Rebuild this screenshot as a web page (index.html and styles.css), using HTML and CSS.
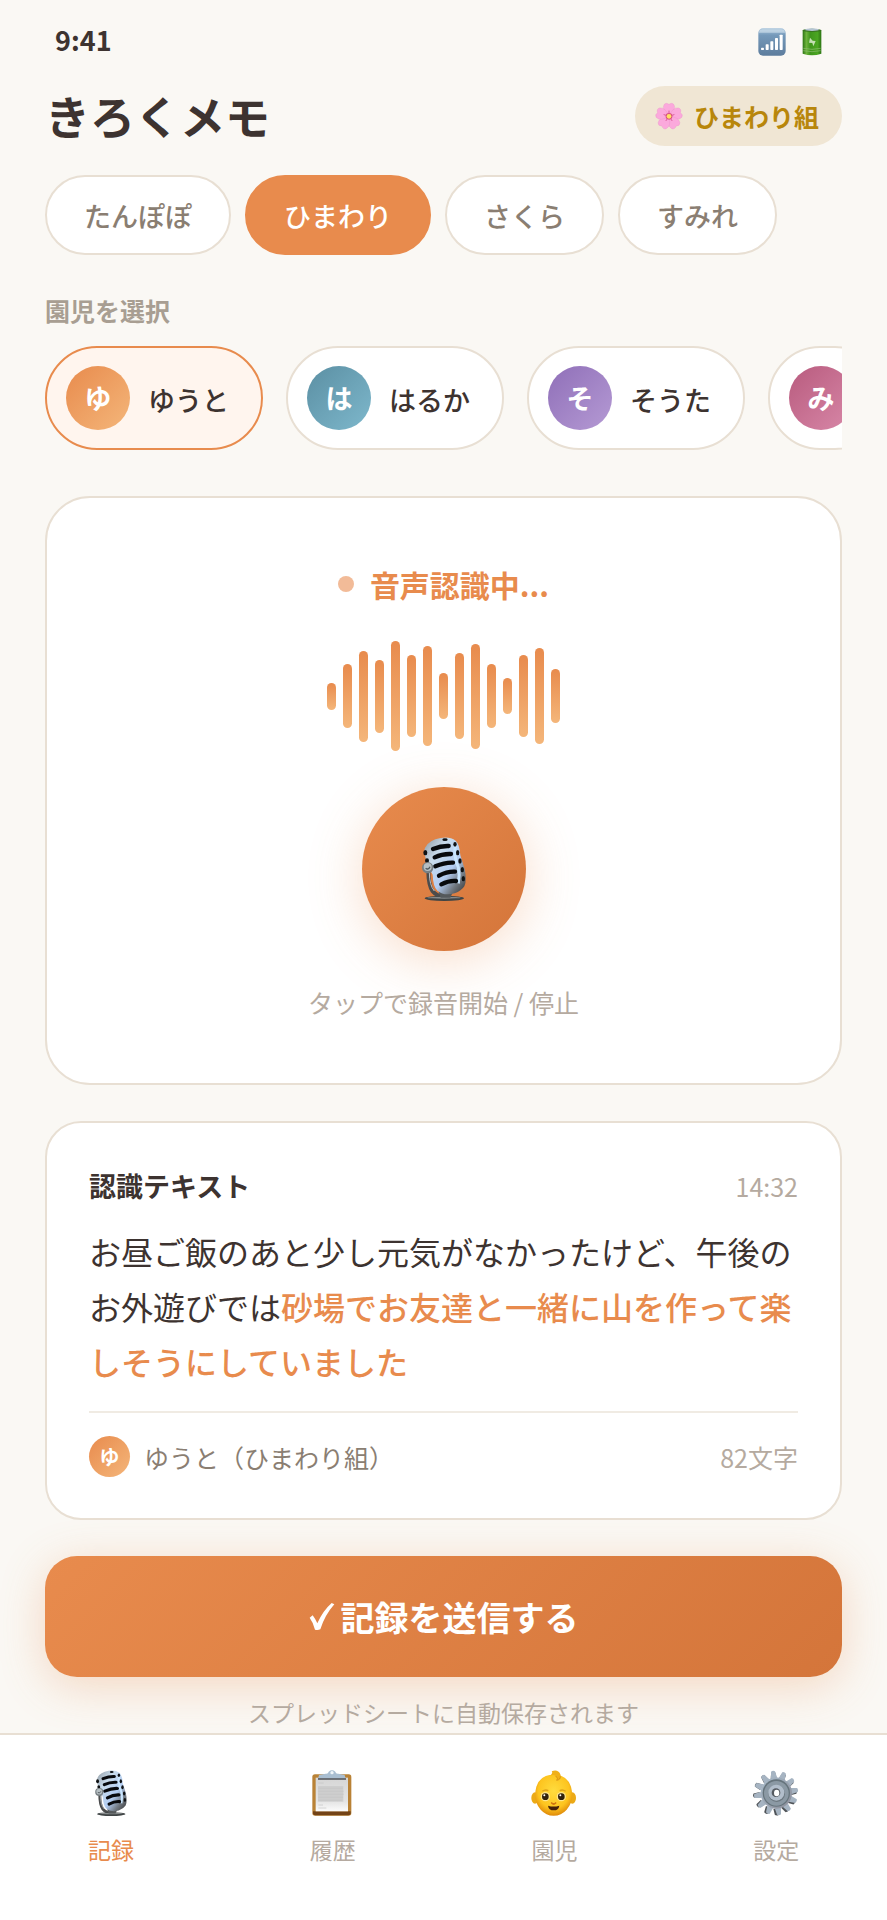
FILE: index.html
```
<!DOCTYPE html>
<html lang="ja">

<head>
    <meta charset="utf-8">
    <meta name="viewport" content="width=device-width, initial-scale=1">
    <title>きろくメモ</title>
    <link rel="stylesheet" href="styles.css">
</head>

<body>
    <!-- microphone is used twice, so it lives in a symbol -->
    <svg class="defs" width="0" height="0" aria-hidden="true">
        <defs>
            <linearGradient id="steel" x1="0" y1="0" x2="1" y2="1">
                <stop offset="0" stop-color="#8e979f" />
                <stop offset="0.3" stop-color="#c9dcec" />
                <stop offset="0.6" stop-color="#b3cdf2" />
                <stop offset="0.8" stop-color="#70777f" />
                <stop offset="1" stop-color="#30302f" />
            </linearGradient>
            <linearGradient id="gear" x1="0" y1="0" x2="1" y2="1">
                <stop offset="0" stop-color="#a9bccc" />
                <stop offset="1" stop-color="#8c8d98" />
            </linearGradient>
            <radialGradient id="skin" cx="0.5" cy="0.4" r="0.6">
                <stop offset="0" stop-color="#ffdc3e" />
                <stop offset="0.7" stop-color="#fdc41f" />
                <stop offset="1" stop-color="#e08b0a" />
            </radialGradient>
            <linearGradient id="signal" x1="0" y1="0" x2="0" y2="1">
                <stop offset="0" stop-color="#a9c5dc" />
                <stop offset="0.25" stop-color="#7599ba" />
                <stop offset="1" stop-color="#5d7d9d" />
            </linearGradient>
            <linearGradient id="battery" x1="0" y1="0" x2="1" y2="0">
                <stop offset="0" stop-color="#2c7413" />
                <stop offset="0.2" stop-color="#6db33c" />
                <stop offset="0.4" stop-color="#3f951c" />
                <stop offset="0.8" stop-color="#4ba622" />
                <stop offset="1" stop-color="#2c7413" />
            </linearGradient>
            <linearGradient id="paper" x1="0" y1="0" x2="0" y2="1">
                <stop offset="0" stop-color="#d6d6d6" />
                <stop offset="0.7" stop-color="#e4e4e4" />
                <stop offset="1" stop-color="#fcfcfc" />
            </linearGradient>
            <symbol id="mic" viewBox="0 0 192 192">
                <path d="M49 100 Q49 145 62 163 Q73 177 96 179" fill="none" stroke="#4b4c4d" stroke-width="12" />
                <path d="M52 105 Q52 145 67 162" fill="none" stroke="#b8bec3" stroke-width="3" />
                <ellipse cx="97" cy="184" rx="59" ry="8" fill="#3f4445" />
                <ellipse cx="96" cy="182" rx="50" ry="3" fill="#85898a" />
                <path d="M80 164h43l-8 18H86z" fill="#55595b" />
                <path d="M36 45 Q39 18 70 7 Q109 -5 131 11 Q143 22 145 55 L158 96 Q165 132 157 148 Q148 162 128 169 Q96 178 76 161 Q63 148 62 113 Q47 91 36 45z" fill="url(#steel)" />
                <path d="M130 21 Q125 62 139 91 Q144 115 139 139" fill="none" stroke="#c9e6ff" stroke-width="9" />
                <g fill="none" stroke="#080a0d" stroke-width="13" stroke-linecap="round">
                    <path d="M63 36 Q88 26 110 27" />
                    <path d="M68 61 Q91 50 117 51" />
                    <path d="M70 88 Q98 76 123 77" />
                    <path d="M81 116 Q105 103 129 104" />
                    <path d="M88 142 Q112 130 132 132" />
                </g>
                <g fill="#101214">
                    <ellipse cx="99" cy="8" rx="8" ry="4" />
                    <ellipse cx="129" cy="22" rx="5" ry="7" />
                    <ellipse cx="137" cy="47" rx="5" ry="8" />
                    <ellipse cx="144" cy="72" rx="5" ry="8" />
                    <ellipse cx="151" cy="98" rx="5" ry="8" />
                    <ellipse cx="154" cy="125" rx="5" ry="8" />
                    <ellipse cx="40" cy="47" rx="6" ry="8" />
                    <ellipse cx="45" cy="71" rx="6" ry="7" />
                </g>
                <circle cx="47" cy="92" r="17" fill="#777f83" />
                <circle cx="47" cy="90" r="12" fill="#b6bfc3" />
                <path d="M41 94q8 6 13-5" fill="none" stroke="#4e575b" stroke-width="4" />
            </symbol>
        </defs>
    </svg>

    <div class="status-bar">
        <span>9:41</span>
        <div class="status-icons">
            <svg width="28" height="28" viewBox="0 0 84 84" role="img" aria-label="電波">
                <rect x="1" y="1" width="82" height="82" rx="14" fill="url(#signal)" />
                <path d="M14 4h56q10 0 11 10H3Q4 4 14 4z" fill="#d6e4ef" opacity="0.6" />
                <g fill="#fff">
                    <rect x="9" y="59" width="9" height="7" rx="2" />
                    <rect x="23" y="49" width="9" height="17" rx="2" />
                    <rect x="37" y="40" width="9" height="26" rx="2" />
                    <rect x="51" y="30" width="9" height="36" rx="2" />
                    <rect x="65" y="20" width="9" height="46" rx="2" />
                </g>
            </svg>
            <svg width="28" height="28" viewBox="0 0 84 84" role="img" aria-label="電池">
                <path d="M14 6v71q28 10 56 0V6z" fill="url(#battery)" />
                <ellipse cx="42" cy="7" rx="28" ry="5" fill="#397420" />
                <ellipse cx="42" cy="5" rx="21" ry="4" fill="#b5c5d3" />
                <path d="M16 61q26 6 52 0M16 68q26 6 52 0" fill="none" stroke="#8fbd74" stroke-width="2" />
                <path d="M36 29l-3 15 10 1 3 10 7-16-9-1z" fill="#c4dfb4" />
            </svg>
        </div>
    </div>

    <main>
        <header class="header">
            <h1>きろくメモ</h1>
            <div class="badge">
                <svg width="28" height="28" viewBox="0 0 84 84" aria-hidden="true">
                    <g fill="#fba9dc" stroke="#e98fc8" stroke-width="1">
                        <path id="petal" d="M42 43Q19 24 27 8Q33 0 42 7Q51 0 57 8Q65 24 42 43z" />
                        <use href="#petal" transform="rotate(72 42 43)" />
                        <use href="#petal" transform="rotate(144 42 43)" />
                        <use href="#petal" transform="rotate(216 42 43)" />
                        <use href="#petal" transform="rotate(288 42 43)" />
                    </g>
                    <path d="M42 43V27M42 43l15-5M42 43l9 13M42 43l-9 13M42 43l-15-5" stroke="#dd5f9c" stroke-width="3" stroke-linecap="round" />
                    <circle cx="42" cy="43" r="10" fill="#d7527f" />
                    <circle cx="42" cy="43" r="7" fill="#ffe166" />
                </svg>
                <span>ひまわり組</span>
            </div>
        </header>

        <div class="tabs">
            <button class="tab" type="button">たんぽぽ</button>
            <button class="tab active" type="button">ひまわり</button>
            <button class="tab" type="button">さくら</button>
            <button class="tab" type="button">すみれ</button>
        </div>

        <h2 class="section-label">園児を選択</h2>
        <div class="children">
            <button class="child selected" type="button"><span class="avatar orange">ゆ</span><span class="name">ゆうと</span></button>
            <button class="child" type="button"><span class="avatar teal">は</span><span class="name">はるか</span></button>
            <button class="child" type="button"><span class="avatar purple">そ</span><span class="name">そうた</span></button>
            <button class="child" type="button"><span class="avatar pink">み</span></button>
        </div>

        <section class="card recorder">
            <div class="rec-status"><span class="dot"></span>音声認識中...</div>
            <div class="wave">
                <span style="height: 27px"></span>
                <span style="height: 64px"></span>
                <span style="height: 91px"></span>
                <span style="height: 73px"></span>
                <span style="height: 110px"></span>
                <span style="height: 82px"></span>
                <span style="height: 100px"></span>
                <span style="height: 46px"></span>
                <span style="height: 86px"></span>
                <span style="height: 105px"></span>
                <span style="height: 64px"></span>
                <span style="height: 36px"></span>
                <span style="height: 82px"></span>
                <span style="height: 96px"></span>
                <span style="height: 54px"></span>
            </div>
            <button class="mic-button" type="button" aria-label="録音">
                <svg width="64" height="64"><use href="#mic" /></svg>
            </button>
            <p class="hint">タップで録音開始 / 停止</p>
        </section>

        <section class="card transcript">
            <div class="transcript-head">
                <h2>認識テキスト</h2>
                <time>14:32</time>
            </div>
            <p class="transcript-text">お昼ご飯のあと少し元気がなかったけど、午後のお外遊びでは<em>砂場でお友達と一緒に山を作って楽しそうにしていました</em></p>
            <div class="transcript-foot">
                <span class="avatar small orange">ゆ</span>
                <span class="who">ゆうと（ひまわり組）</span>
                <span class="count">82文字</span>
            </div>
        </section>

        <button class="submit" type="button">
            <svg width="26" height="29" viewBox="0 0 78 87" aria-hidden="true">
                <path d="M2 47L11 40Q20 52 25 64Q41 27 68 3L76 7Q47 40 34 82Q26 86 18 83Q13 62 2 47z" fill="#fff" />
            </svg>
            記録を送信する
        </button>
        <p class="note">スプレッドシートに自動保存されます</p>
    </main>

    <nav class="tab-bar">
        <a class="current" href="#record">
            <svg width="46" height="46"><use href="#mic" /></svg>
            記録
        </a>
        <a href="#history">
            <svg width="46" height="46" viewBox="0 0 138 138" aria-hidden="true">
                <rect x="7" y="13" width="117" height="124" rx="8" fill="#b98236" />
                <path d="M9 124h113v6q0 6-7 6H16q-7 0-7-6z" fill="#734317" />
                <rect x="17" y="23" width="97" height="101" fill="url(#paper)" />
                <rect x="24" y="48" width="76" height="47" fill="#cecece" />
                <path d="M25 39h16M25 55h73M25 64h76M25 73h76M25 82h74M25 91h70M25 105h14M25 114h24" stroke="#c4c4c4" stroke-width="2" />
                <path d="M24 27L27 15L47 11Q55 12 56 5Q66-3 76 5Q77 12 85 11L104 15L107 27z" fill="#a9bed1" />
                <circle cx="66" cy="8" r="5" fill="#eff5f9" />
                <path d="M24 27h84" stroke="#5d6064" stroke-width="5" />
            </svg>
            履歴
        </a>
        <a href="#children">
            <svg width="46" height="46" viewBox="0 0 138 138" aria-hidden="true">
                <ellipse cx="12" cy="84" rx="11" ry="17" fill="#ecaa17" />
                <ellipse cx="124" cy="84" rx="11" ry="17" fill="#ecaa17" />
                <path d="M68 14Q108 14 120 50Q131 92 107 119Q91 137 68 137Q45 137 29 119Q5 92 16 50Q28 14 68 14z" fill="url(#skin)" />
                <path d="M57 18Q66 13 73 17Q82 23 78 31Q93 28 88 13Q81-3 62 4Q67 9 57 18z" fill="#f0b019" />
                <path d="M74 18q9 7 3 13q12-2 11-12" fill="none" stroke="#c9820f" stroke-width="2" />
                <path d="M34 64q9-7 18-2M86 62q9-5 18 2" fill="none" stroke="#dda31a" stroke-width="4" />
                <circle cx="43" cy="80" r="14" fill="#ffe68a" />
                <circle cx="91" cy="80" r="14" fill="#ffe68a" />
                <circle cx="43" cy="80" r="10" fill="#30210c" />
                <circle cx="91" cy="80" r="10" fill="#30210c" />
                <circle cx="40" cy="76" r="3" fill="#fff" />
                <circle cx="88" cy="76" r="3" fill="#fff" />
                <path d="M62 99q6 6 12 0" fill="none" stroke="#cf7410" stroke-width="5" stroke-linecap="round" />
                <path d="M51 107q17 5 34 0q-2 14-17 14t-17-14z" fill="#442109" />
            </svg>
            園児
        </a>
        <a href="#settings">
            <svg width="46" height="46" viewBox="0 0 138 138" aria-hidden="true">
                <g fill="#4f5357" transform="translate(-3 2) rotate(-5 69 69)">
                    <path id="tooth" d="M60 24L63 5Q68 1 75 5L78 24z" />
                    <use href="#tooth" transform="rotate(30 69 69)" />
                    <use href="#tooth" transform="rotate(60 69 69)" />
                    <use href="#tooth" transform="rotate(90 69 69)" />
                    <use href="#tooth" transform="rotate(120 69 69)" />
                    <use href="#tooth" transform="rotate(150 69 69)" />
                    <use href="#tooth" transform="rotate(180 69 69)" />
                    <use href="#tooth" transform="rotate(210 69 69)" />
                    <use href="#tooth" transform="rotate(240 69 69)" />
                    <use href="#tooth" transform="rotate(270 69 69)" />
                    <use href="#tooth" transform="rotate(300 69 69)" />
                    <use href="#tooth" transform="rotate(330 69 69)" />
                </g>
                <g fill="#a6b4c2" transform="rotate(-8 69 69)">
                    <path id="tooth-top" d="M60 24L63 4Q69 0 75 4L79 24z" />
                    <use href="#tooth-top" transform="rotate(30 69 69)" />
                    <use href="#tooth-top" transform="rotate(60 69 69)" />
                    <use href="#tooth-top" transform="rotate(90 69 69)" />
                    <use href="#tooth-top" transform="rotate(120 69 69)" />
                    <use href="#tooth-top" transform="rotate(150 69 69)" />
                    <use href="#tooth-top" transform="rotate(180 69 69)" />
                    <use href="#tooth-top" transform="rotate(210 69 69)" />
                    <use href="#tooth-top" transform="rotate(240 69 69)" />
                    <use href="#tooth-top" transform="rotate(270 69 69)" />
                    <use href="#tooth-top" transform="rotate(300 69 69)" />
                    <use href="#tooth-top" transform="rotate(330 69 69)" />
                </g>
                <circle cx="70" cy="69" r="47" fill="url(#gear)" />
                <circle cx="70" cy="69" r="41" fill="#66747c" />
                <circle cx="70" cy="70" r="37" fill="#8b99a4" />
                <circle cx="71" cy="71" r="25" fill="#6c7880" />
                <circle cx="70" cy="68" r="24" fill="#b2becb" />
                <circle cx="69" cy="68" r="13" fill="#555b61" />
                <ellipse cx="71" cy="69" rx="8" ry="10" fill="#fff" />
            </svg>
            設定
        </a>
    </nav>
</body>

</html>
```
FILE: styles.css
```
* {
    box-sizing: border-box;
    margin: 0;
    padding: 0;
}

body {
    display: flex;
    flex-direction: column;
    min-height: 100vh;
    background: #faf8f4;
    color: #3d3330;
    font-family: "Noto Sans CJK JP", "Noto Sans", sans-serif;
    font-size: 25px;
    line-height: 36px;
}

button {
    font: inherit;
    color: inherit;
    border: none;
    cursor: pointer;
}

svg {
    display: block;
    flex-shrink: 0;
}

.defs {
    position: absolute;
}

.status-bar {
    display: flex;
    justify-content: space-between;
    align-items: center;
    padding: 22px 55px 0;
    font-size: 27px;
    font-weight: 700;
}

.status-icons {
    display: flex;
    gap: 12px;
    padding: 4px 6px 0 0;
}

main {
    display: flex;
    flex-direction: column;
    padding: 28px 45px 5px;
}

.header {
    display: flex;
    justify-content: space-between;
    align-items: center;
    margin-bottom: 29px;
}

h1 {
    font-size: 45px;
    line-height: 60px;
    font-weight: 700;
}

.badge {
    display: flex;
    align-items: center;
    gap: 11px;
    padding: 12px 23px 12px 20px;
    border-radius: 30px;
    background: #f0e6d4;
    color: #b8860b;
    font-weight: 700;
}

/* class tabs */
.tabs {
    display: flex;
    gap: 14px;
    margin-bottom: 37px;
}

.tab {
    padding: 21px 37px 19px;
    border: 2px solid #e8dfd3;
    border-radius: 40px;
    background: #fff;
    color: #8a7e72;
    font-size: 27px;
    font-weight: 500;
}

.tab.active {
    background: #e88b4d;
    border-color: #e88b4d;
    color: #fff;
}

.section-label {
    margin-bottom: 18px;
    color: #a89e92;
    font-size: 25px;
    font-weight: 700;
}

/* child picker, scrolls sideways */
.children {
    display: flex;
    gap: 23px;
    margin-bottom: 46px;
    overflow-x: auto;
    scrollbar-width: none;
}

.child {
    display: flex;
    flex-shrink: 0;
    align-items: center;
    gap: 18px;
    padding: 18px 32px 18px 19px;
    border: 2px solid #e8dfd3;
    border-radius: 52px;
    background: #fff;
    font-size: 27px;
    font-weight: 500;
}

.child.selected {
    border-color: #e88b4d;
    background: #fff5ee;
}

.name {
    padding-top: 3px;
}

.avatar {
    display: flex;
    align-items: center;
    justify-content: center;
    width: 64px;
    height: 64px;
    border-radius: 50%;
    color: #fff;
    font-size: 27px;
    font-weight: 700;
}

.avatar.small {
    width: 41px;
    height: 41px;
    font-size: 20px;
}

.orange {
    background: linear-gradient(135deg, #e88b4d, #f4b67a);
}

.teal {
    background: linear-gradient(135deg, #5b8fa3, #7eb8cc);
}

.purple {
    background: linear-gradient(135deg, #8f6fb8, #b59ad4);
}

.pink {
    background: linear-gradient(135deg, #b85b7e, #d888a8);
}

.card {
    margin-bottom: 36px;
    border: 2px solid #e8dfd3;
    background: #fff;
}

/* recorder */
.recorder {
    display: flex;
    flex-direction: column;
    align-items: center;
    padding: 66px 42px 63px;
    border-radius: 45px;
}

.rec-status {
    display: flex;
    align-items: center;
    gap: 16px;
    margin-bottom: 37px;
    color: #e88b4d;
    font-size: 30px;
    line-height: 40px;
    font-weight: 700;
}

.dot {
    width: 16px;
    height: 16px;
    border-radius: 50%;
    background: #f2bb98;
}

.wave {
    display: flex;
    align-items: center;
    gap: 7px;
    height: 110px;
    margin-bottom: 36px;
}

.wave span {
    width: 9px;
    border-radius: 5px;
    background: linear-gradient(180deg, #e88b4d, #f4b67a);
}

.mic-button {
    display: flex;
    align-items: center;
    justify-content: center;
    width: 164px;
    height: 164px;
    margin-bottom: 33px;
    border-radius: 50%;
    background: linear-gradient(135deg, #e88b4d, #d4753a);
    box-shadow: 0 9px 54px rgba(232, 139, 77, 0.3);
}

.hint {
    color: #b5aaa0;
}

/* transcript */
.transcript {
    padding: 45px 42px 41px;
    border-radius: 36px;
}

.transcript-head {
    display: flex;
    justify-content: space-between;
    align-items: center;
    margin-bottom: 20px;
}

.transcript-head h2 {
    font-size: 27px;
    font-weight: 700;
}

time {
    color: #b5aaa0;
}

.transcript-text {
    font-size: 32px;
    line-height: 55px;
}

.transcript-text em {
    color: #e88b4d;
    font-style: normal;
    font-weight: 500;
}

.transcript-foot {
    display: flex;
    align-items: center;
    margin-top: 22px;
    padding-top: 23px;
    border-top: 2px solid #f0ebe3;
}

.who {
    margin-left: 14px;
    color: #8a7e72;
}

.count {
    margin-left: auto;
    color: #b5aaa0;
}

.submit {
    display: flex;
    align-items: center;
    justify-content: center;
    gap: 6px;
    padding: 38px;
    border-radius: 32px;
    background: linear-gradient(135deg, #e88b4d, #d4753a);
    box-shadow: 0 9px 45px rgba(232, 139, 77, 0.3);
    color: #fff;
    font-size: 34px;
    line-height: 45px;
    font-weight: 700;
}

.note {
    margin-top: 19px;
    color: #b5aaa0;
    font-size: 23px;
    line-height: 32px;
    text-align: center;
}

/* bottom navigation */
.tab-bar {
    position: relative;
    display: flex;
    flex: 1;
    padding: 35px 0 52px;
    border-top: 2px solid #e8dfd3;
    background: #fff;
}

.tab-bar a {
    display: flex;
    flex: 1;
    flex-direction: column;
    align-items: center;
    gap: 17px;
    color: #b5aaa0;
    font-size: 23px;
    line-height: 32px;
    text-decoration: none;
}

.tab-bar a.current {
    color: #e88b4d;
}
```
